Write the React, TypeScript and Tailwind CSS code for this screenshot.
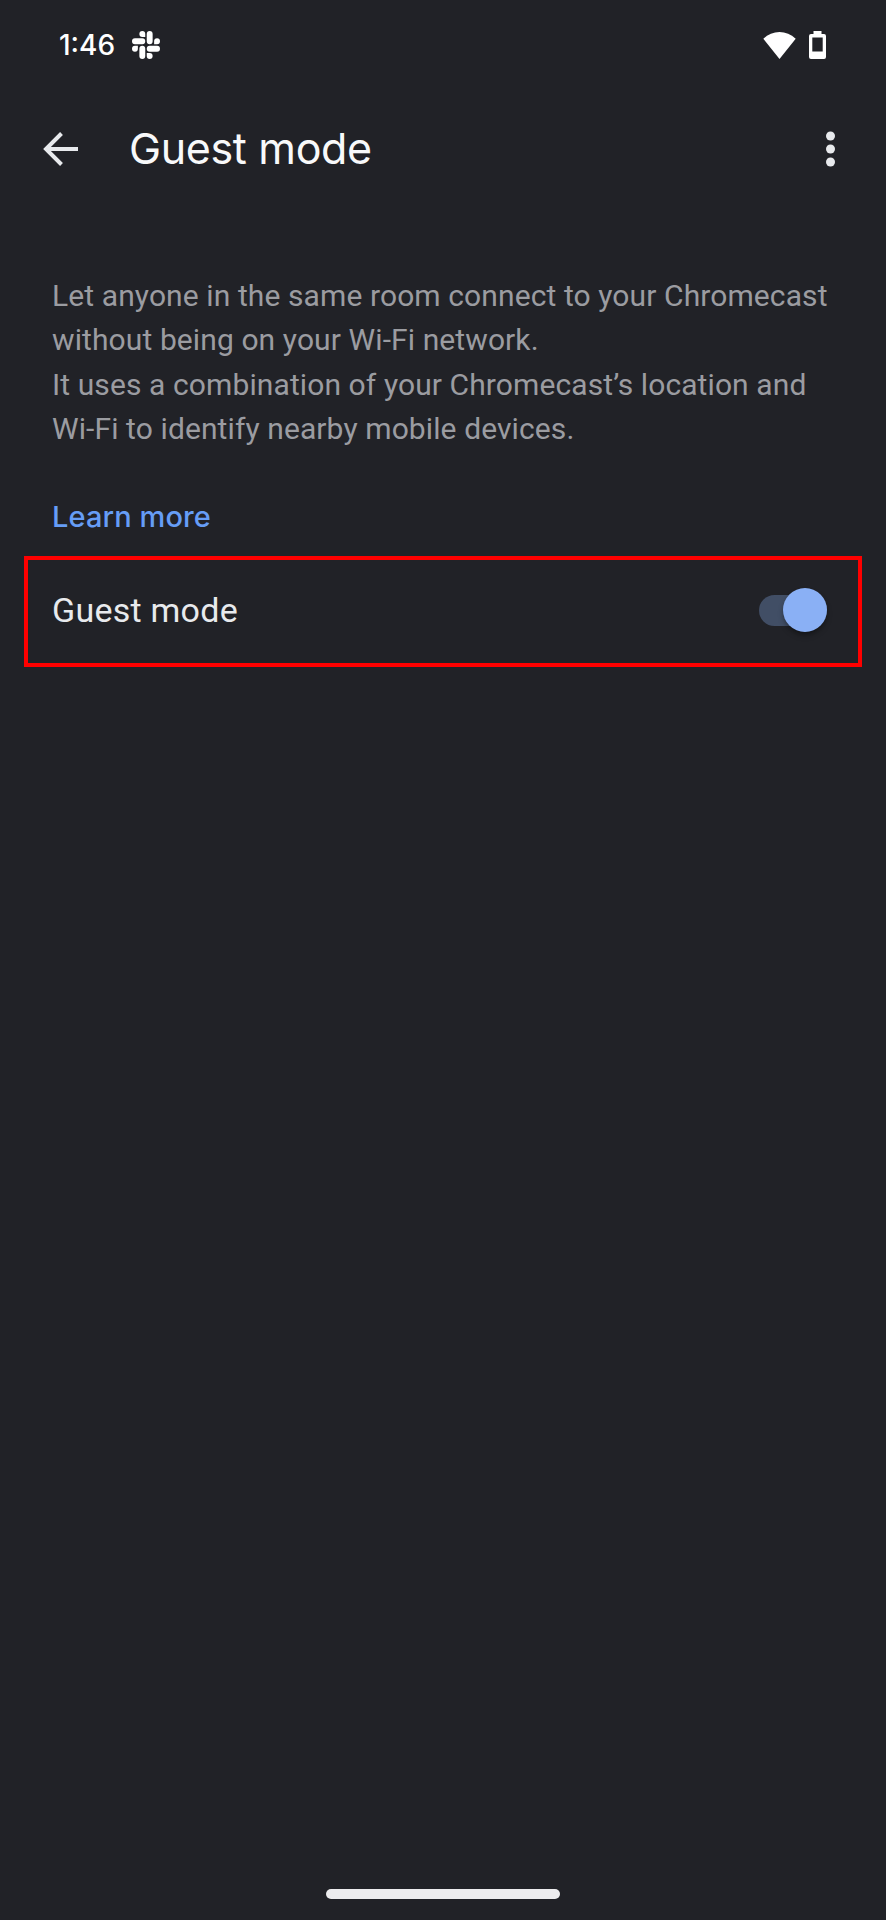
import { useState } from "react";

function SlackIcon() {
  return (
    <svg className="h-7 w-7" viewBox="0 0 24 24" fill="currentColor" aria-hidden="true">
      <path d="M5.042 15.165a2.528 2.528 0 0 1-2.52 2.523A2.528 2.528 0 0 1 0 15.165a2.527 2.527 0 0 1 2.522-2.52h2.52v2.52zM6.313 15.165a2.527 2.527 0 0 1 2.521-2.52 2.527 2.527 0 0 1 2.521 2.52v6.313A2.528 2.528 0 0 1 8.834 24a2.528 2.528 0 0 1-2.521-2.522v-6.313zM8.834 5.042a2.528 2.528 0 0 1-2.521-2.52A2.528 2.528 0 0 1 8.834 0a2.528 2.528 0 0 1 2.521 2.522v2.52H8.834zM8.834 6.313a2.528 2.528 0 0 1 2.521 2.521 2.528 2.528 0 0 1-2.521 2.521H2.522A2.528 2.528 0 0 1 0 8.834a2.528 2.528 0 0 1 2.522-2.521h6.312zM18.956 8.834a2.528 2.528 0 0 1 2.522-2.521A2.528 2.528 0 0 1 24 8.834a2.528 2.528 0 0 1-2.522 2.521h-2.522V8.834zM17.688 8.834a2.528 2.528 0 0 1-2.523 2.521 2.527 2.527 0 0 1-2.52-2.521V2.522A2.527 2.527 0 0 1 15.165 0a2.528 2.528 0 0 1 2.523 2.522v6.312zM15.165 18.956a2.528 2.528 0 0 1 2.523 2.522A2.528 2.528 0 0 1 15.165 24a2.527 2.527 0 0 1-2.52-2.522v-2.522h2.52zM15.165 17.688a2.527 2.527 0 0 1-2.52-2.523 2.526 2.526 0 0 1 2.52-2.52h6.313A2.527 2.527 0 0 1 24 15.165a2.528 2.528 0 0 1-2.522 2.523h-6.313z" />
    </svg>
  );
}

function StatusBar() {
  return (
    <div className="flex h-[90px] items-center justify-between pl-[59px] pr-[60px] text-white">
      <div className="flex items-center">
        <span className="w-[73px] font-['Inter',sans-serif] text-[28px] font-medium leading-none">1:46</span>
        <SlackIcon />
      </div>
      <div className="flex items-center gap-[13px]">
        <svg className="h-[27px] w-[33px]" viewBox="0 0 33 27" fill="currentColor" aria-hidden="true">
          <path d="M16.5 27 0.3 6.8C5 2.3 10.6 0 16.5 0s11.5 2.3 16.2 6.8z" />
        </svg>
        <svg className="h-7 w-[17px]" viewBox="0 0 17 28" fill="currentColor" fillRule="evenodd" aria-hidden="true">
          <path d="M4.5 0h8v3H15a2 2 0 0 1 2 2v21a2 2 0 0 1-2 2H2a2 2 0 0 1-2-2V5a2 2 0 0 1 2-2h2.500zM3.300 6.500v14h10.400v-14z" />
        </svg>
      </div>
    </div>
  );
}

function AppBar() {
  return (
    <header className="flex h-[118px] items-center pl-[43px] pr-[51px] text-[#e8eaed]">
      <button type="button" aria-label="Back" className="mr-[51px]">
        <svg className="h-[34px] w-[35px]" viewBox="0 0 35 34" fill="none" stroke="currentColor" strokeWidth={4} aria-hidden="true">
          <path d="M35 17H3M18.500 1.500 3 17l15.500 15.500" />
        </svg>
      </button>
      <h1 className="flex-1 pb-0.5 font-['Inter',sans-serif] text-[43px] leading-none tracking-[-0.35px] text-[#f8f9fa]">Guest mode</h1>
      <button type="button" aria-label="More options">
        <svg className="h-9 w-[9px]" viewBox="0 0 9 36" fill="currentColor" aria-hidden="true">
          <circle cx="4.5" cy="5" r="4.5" />
          <circle cx="4.5" cy="18" r="4.5" />
          <circle cx="4.5" cy="31" r="4.5" />
        </svg>
      </button>
    </header>
  );
}

function Toggle({ checked, onChange }: { checked: boolean; onChange: (v: boolean) => void }) {
  return (
    <button
      type="button"
      role="switch"
      aria-checked={checked}
      aria-label="Guest mode"
      onClick={() => onChange(!checked)}
      className="flex h-11 w-[68px] items-center"
    >
      <span className={`flex h-[31px] w-full items-center rounded-full ${checked ? "justify-end bg-[#414e65]" : "justify-start bg-[#5f6368]"}`}>
        <span className={`h-11 w-11 shrink-0 rounded-full shadow-md shadow-black/30 ${checked ? "bg-[#8ab0f5]" : "bg-[#bdc1c6]"}`} />
      </span>
    </button>
  );
}

export default function App() {
  const [guestMode, setGuestMode] = useState(true);

  return (
    <div className="flex h-[1920px] w-[886px] flex-col bg-[#212227] font-['Roboto',sans-serif]">
      <StatusBar />
      <AppBar />

      <main className="flex-1 pt-[66px]">
        <p className="whitespace-nowrap pl-[52px] text-[30px] leading-[44.3px] tracking-[0.1px] text-[#9b9ca1]">
          Let anyone in the same room connect to your Chromecast
          <br />
          without being on your Wi-Fi network.
          <br />
          It uses a combination of your Chromecast’s location and
          <br />
          Wi-Fi to identify nearby mobile devices.
        </p>
        <a href="#" className="ml-[52px] mt-[44px] block w-fit font-['Inter',sans-serif] text-[29px] font-medium leading-[44px] tracking-[0.1px] text-[#669df6]">
          Learn more
        </a>

        {/* Highlighted setting */}
        <div className="mx-6 mt-[17px] flex h-[111px] items-center justify-between border-4 border-[#ff0000] pb-[3px] pl-6 pr-[31px]">
          <span className="text-[34px] leading-none tracking-[0.25px] text-[#e8eaed]">Guest mode</span>
          <Toggle checked={guestMode} onChange={setGuestMode} />
        </div>
      </main>

      <div className="mx-auto mb-[21px] h-[10px] w-[234px] rounded-full bg-[#ececee]" />
    </div>
  );
}
